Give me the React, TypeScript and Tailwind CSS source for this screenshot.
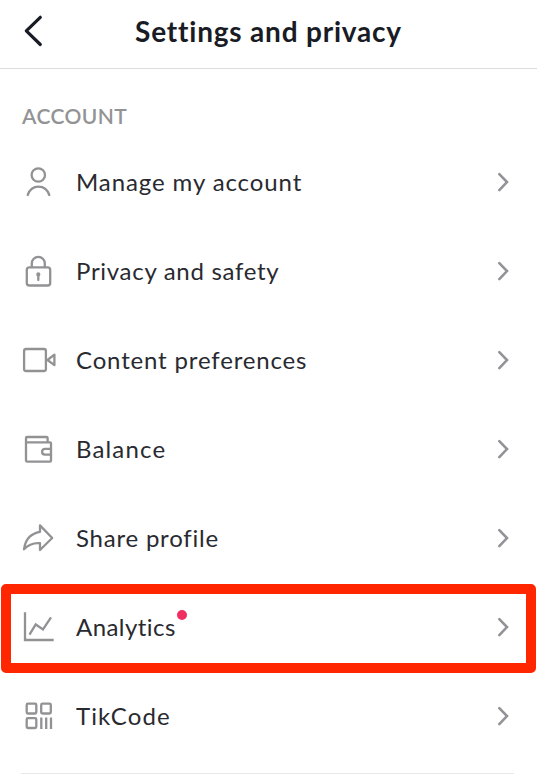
import React from "react";

type Row = { label: string; spacing: string; viewBox: string; icon: React.ReactNode; dot?: boolean };

const rows: Row[] = [
  {
    label: "Manage my account",
    spacing: "tracking-[0.9px]",
    viewBox: "18 162 40 41",
    icon: (
      <>
        <circle cx="38.3" cy="175" r="6.7" />
        <path d="M27.7 195C29.6 189.6 33.7 186.7 38.5 186.7S47.4 189.6 49.3 195" />
      </>
    ),
  },
  {
    label: "Privacy and safety",
    spacing: "tracking-[0.7px]",
    viewBox: "18 251 40 41",
    icon: (
      <>
        <rect x="26.8" y="267.3" width="23.4" height="18.2" rx="2.6" />
        <path d="M31.8 267V263.5A6.5 6.7 0 0 1 44.8 263.5V267" />
        <circle cx="38.3" cy="274.4" r="1.5" fill="currentColor" strokeWidth="1.2" />
        <path d="M38.3 275V280" />
      </>
    ),
  },
  {
    label: "Content preferences",
    spacing: "tracking-[0.84px]",
    viewBox: "18 340 40 41",
    icon: (
      <>
        <rect x="24.1" y="349" width="21.8" height="22" rx="2" />
        <path d="M54.4 354.6V365.2L47.5 360Z" />
      </>
    ),
  },
  {
    label: "Balance",
    spacing: "tracking-[1.15px]",
    viewBox: "18 429 40 41",
    icon: (
      <>
        <path d="M26 442.3H50Q51 442.3 51 443.3V460.5Q51 461.6 50 461.6H27Q26 461.6 26 460.6V438Q26 437 27 437H46.5Q47.6 437 47.6 438V442" />
        <path d="M51 448.8H45A2.9 2.9 0 0 0 45 454.6H51" />
      </>
    ),
  },
  {
    label: "Share profile",
    spacing: "tracking-[0.78px]",
    viewBox: "18 518 40 41",
    icon: <path d="M40 525.4L52.2 538L40 550V543.2C33.5 542.7 28.2 544.8 24 549.3C25.2 539.8 31 533.4 40 531.8Z" />,
  },
  {
    label: "Analytics",
    spacing: "tracking-[0.45px]",
    viewBox: "18 607 40 41",
    dot: true,
    icon: <path d="M25 612.3V640H53.7M29.5 634.6L35.7 624.5L43 629.5L51 617.3" strokeLinejoin="miter" strokeLinecap="butt" />,
  },
  {
    label: "TikCode",
    spacing: "tracking-[1.1px]",
    viewBox: "18 696 40 41",
    icon: (
      <>
        <rect x="26.7" y="703.7" width="9.6" height="9.8" rx="1.3" />
        <rect x="41.2" y="703.7" width="9.6" height="9.8" rx="1.3" />
        <rect x="26.7" y="718.2" width="9.6" height="9.8" rx="1.3" />
        <path d="M41.3 717.5V729M46.2 717.5V729M51 717.5V729" strokeLinecap="butt" />
      </>
    ),
  },
];

export default function App() {
  return (
    <main className="h-[779px] w-[537px] overflow-hidden bg-white font-['Lato',sans-serif] text-[#292a30]">
      <header className="grid h-[69px] grid-cols-[68px_1fr_68px] items-center border-b border-[#dcdcdd] pb-1.5 text-[#191b25]">
        <svg className="ml-5 size-8" viewBox="20 15.5 32 32" fill="none" stroke="currentColor" strokeWidth="3.2" strokeLinecap="round" strokeLinejoin="round">
          <path d="M40.3 17.8L26.3 31.4L40.3 45" />
        </svg>
        <h1 className="text-center text-[28px] leading-8 font-bold tracking-[0.8px] whitespace-nowrap">Settings and privacy</h1>
      </header>
      <section>
        <h2 className="flex h-[69px] items-center pt-[25px] pb-px pl-[22px] text-[21px] font-semibold tracking-[0.4px] text-[#929395]">ACCOUNT</h2>
        <ul>
          {rows.map((row) => (
            <li key={row.label} className="relative flex h-[89px] items-center pl-[18px] pr-[24px]">
              <svg className="h-[41px] w-10 shrink-0 text-[#929295]" viewBox={row.viewBox} fill="none" stroke="currentColor" strokeWidth="2.3" strokeLinecap="round" strokeLinejoin="round">
                {row.icon}
              </svg>
              <span className="ml-[18px] flex-1 pb-[2px] text-[24px] leading-8 whitespace-nowrap">
                <span className={row.spacing}>{row.label}</span>
                {row.dot && <i className="absolute top-[27px] left-[177px] size-[10px] rounded-full bg-[#f02f60]" />}
              </span>
              <svg className="h-6 w-4 shrink-0" viewBox="0 0 16 24" fill="none" stroke="#929297" strokeWidth="2.6" strokeLinecap="round">
                <path d="M2.3 3.1L10 11.1L2.3 19.1" />
              </svg>
              {row.dot && <div className="pointer-events-none absolute top-[1px] left-[1px] h-[89px] w-[535px] rounded-[5px] border-[10px] border-[#ff2600]" />}
            </li>
          ))}
        </ul>
        <hr className="mt-[12px] mr-[23px] ml-[21px] border-[#e8e8e9]" />
      </section>
    </main>
  );
}
